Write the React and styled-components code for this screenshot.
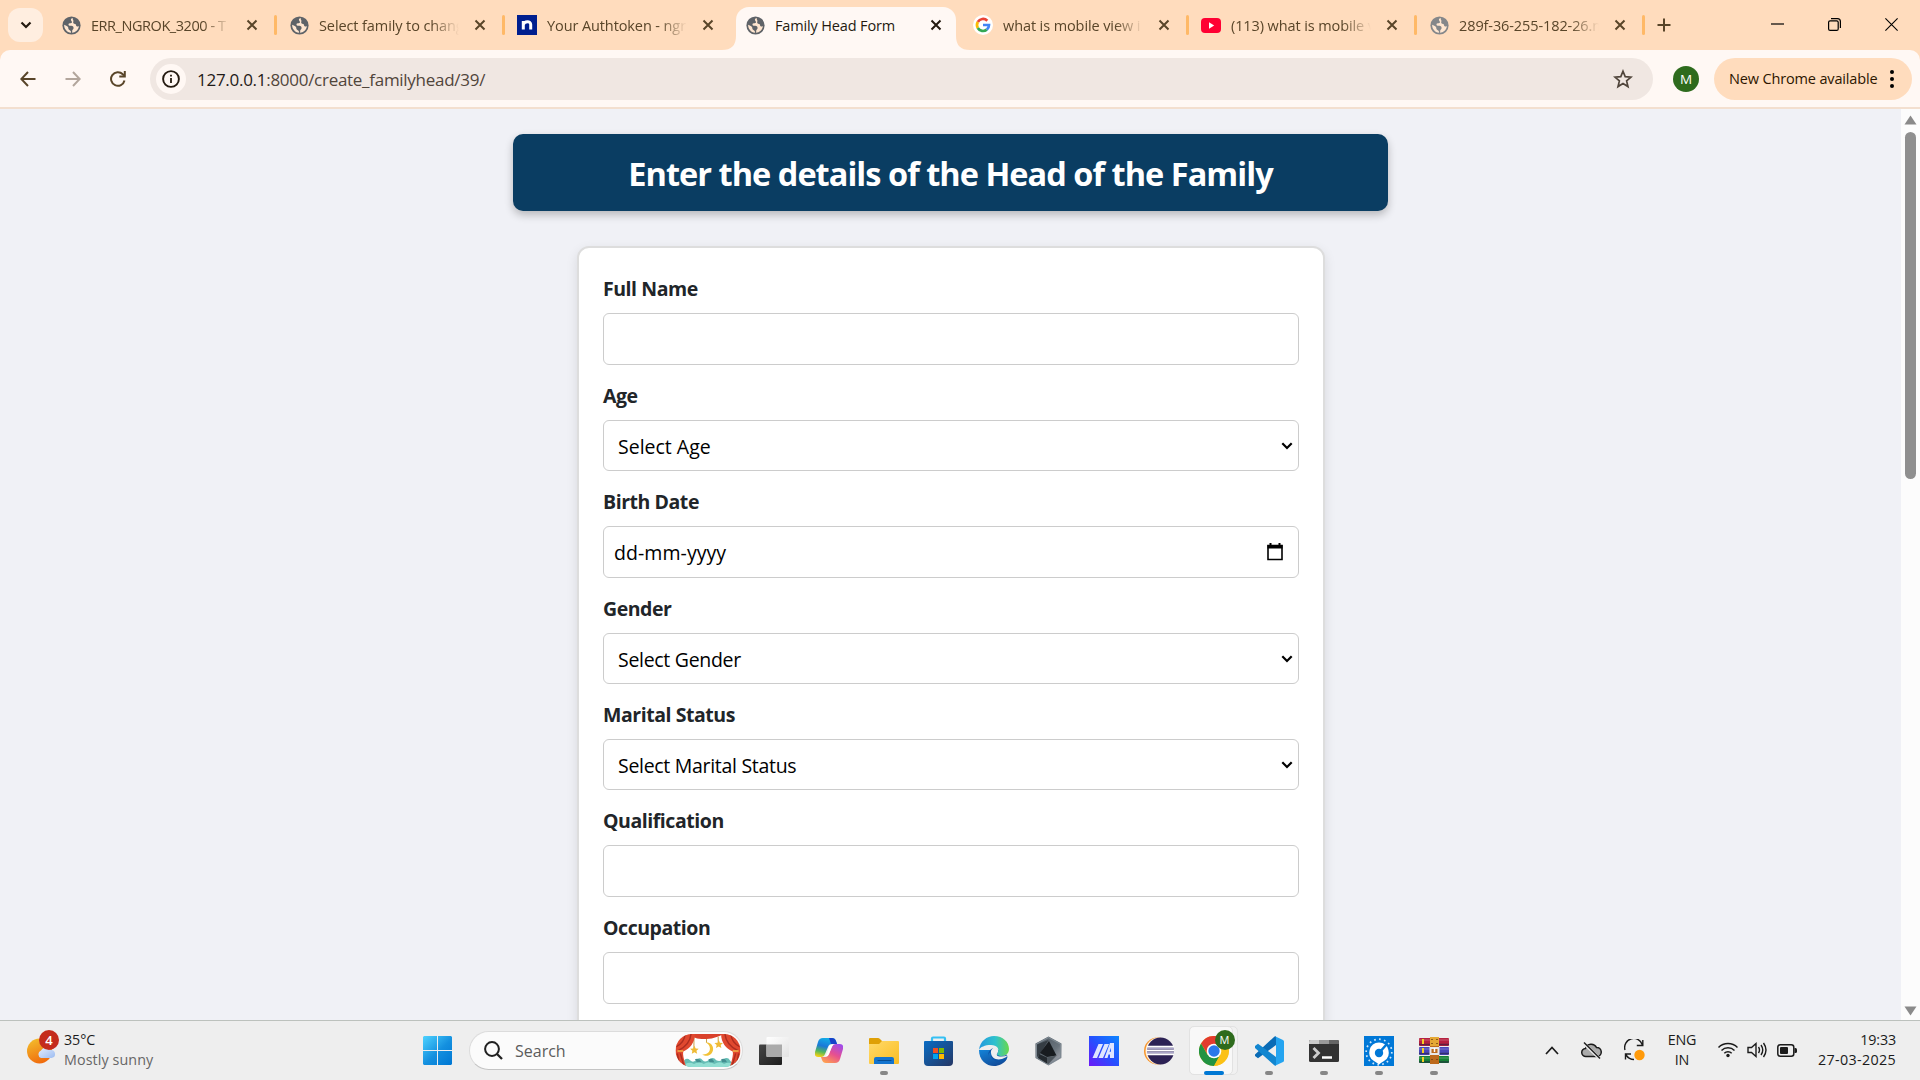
import React from "react";
import styled, { createGlobalStyle, css } from "styled-components";

const Global = createGlobalStyle`
  *, *::before, *::after { box-sizing: border-box; }
  body { margin: 0; overflow: hidden; font-family: "Open Sans", "Noto Sans", sans-serif; }
  svg { display: block; flex: none; }
`;

const Screen = styled.div`
  width: 1920px;
  height: 1080px;
  display: flex;
  flex-direction: column;
  overflow: hidden;
`;

/* ---------- tab strip ---------- */
const TabStrip = styled.div`
  height: 50px;
  flex: none;
  display: flex;
  background: #ffdcbd;
  padding-left: 8px;
`;
const TabSearch = styled.div`
  width: 35px;
  height: 34px;
  margin: 8px 8px 0 0;
  border-radius: 12px;
  background: #ffeee0;
  display: flex;
  align-items: center;
  justify-content: center;
`;
const Tab = styled.div`
  position: relative;
  width: 228px;
  flex: none;
  height: 50px;
  display: flex;
  align-items: center;
  padding: 0 0 0 10px;
  color: ${(p) => (p.$active ? "#241a10" : "#594529")};
  ${(p) =>
    p.$active &&
    css`
      &::before {
        content: "";
        position: absolute;
        left: 1px;
        top: 7px;
        width: 220px;
        height: 43px;
        background: #fff8f4;
        border-radius: 13px 13px 0 0;
      }
    `}
`;
const Flare = styled.svg`
  position: absolute;
  bottom: 0;
  left: ${(p) => p.$left}px;
`;
const Favicon = styled.div`
  position: relative;
  width: 20px;
  height: 20px;
  display: flex;
  align-items: center;
  justify-content: center;
`;
const TabTitle = styled.div`
  position: relative;
  width: 140px;
  margin-left: 10px;
  white-space: nowrap;
  font-size: 14.5px;
  line-height: 24px;
  padding-top: 1px;
  letter-spacing: ${(p) => p.$ls || 0}px;
  ${(p) => p.$fade && css`mask-image: linear-gradient(90deg, #000 112px, transparent 140px);`}
`;
const TabClose = styled.div`
  position: relative;
  margin-left: 15px;
`;
const Divider = styled.div`
  width: 3px;
  height: 20px;
  border-radius: 2px;
  margin-left: 16px;
  background: #ffb967;
  visibility: ${(p) => (p.$hidden ? "hidden" : "visible")};
`;
const NewTab = styled.div`
  display: flex;
  align-items: center;
  margin-left: 10px;
`;
const WindowButtons = styled.div`
  margin-left: auto;
  display: flex;
  align-items: center;
  height: 49px;
`;
const WindowButton = styled.div`
  width: 57px;
  display: flex;
  justify-content: center;
`;

/* ---------- toolbar ---------- */
const ToolbarBack = styled.div`
  height: 59px;
  flex: none;
  background: #ffdcbd;
`;
const Toolbar = styled.div`
  height: 59px;
  background: #fff8f4;
  border-radius: 10px 10px 0 0;
  border-bottom: 2px solid #f3dfcf;
  display: flex;
  align-items: center;
  padding: 0 8px 0 5px;
`;
const ToolButton = styled.div`
  width: 45px;
  display: flex;
  justify-content: center;
`;
const AddressBar = styled.div`
  width: 1503px;
  height: 42px;
  margin-left: 10px;
  border-radius: 21px;
  background: #f0e7e2;
  display: flex;
  align-items: center;
  padding: 0 20px 0 6px;
`;
const SiteInfo = styled.div`
  width: 30px;
  height: 30px;
  border-radius: 50%;
  background: #fff8f4;
  display: flex;
  align-items: center;
  justify-content: center;
`;
const Url = styled.div`
  flex: 1;
  margin-left: 11px;
  padding-top: 2px;
  font-size: 17px;
  color: #50453b;
  letter-spacing: -0.28px;
  b {
    font-weight: 400;
    color: #1f1a17;
  }
`;
const Avatar = styled.div`
  width: 26px;
  height: 26px;
  margin: 0 15px 0 20px;
  border-radius: 50%;
  background: #2e6b1d;
  color: #fff;
  font-size: 13.5px;
  display: flex;
  align-items: center;
  justify-content: center;
`;
const UpdatePill = styled.div`
  flex: 1;
  height: 42px;
  border-radius: 21px;
  background: #ffdcbd;
  color: #2c1600;
  display: flex;
  align-items: center;
  justify-content: space-between;
  padding: 0 18px 0 15px;
  font-size: 14.5px;
  letter-spacing: -0.15px;
  white-space: nowrap;
`;

/* ---------- page ---------- */
const Viewport = styled.div`
  height: 911px;
  flex: none;
  display: flex;
  background: #f0f1f6;
  overflow: hidden;
`;
const Page = styled.main`
  flex: 1;
  display: flex;
  flex-direction: column;
  align-items: center;
  padding-top: 25px;
`;
const Heading = styled.h1`
  margin: 0;
  width: 875px;
  height: 77px;
  flex: none;
  border-radius: 10px;
  background: #0a3d62;
  color: #fff;
  box-shadow: 0 4px 8px rgba(0, 0, 0, 0.24);
  display: flex;
  align-items: center;
  justify-content: center;
  padding-top: 3px;
  font-size: 32.5px;
  line-height: 40px;
  font-weight: 700;
  white-space: nowrap;
  letter-spacing: -0.97px;
`;
const Card = styled.form`
  width: 748px;
  height: 900px;
  flex: none;
  margin: 35px 0 0 1px;
  padding: 10px 24px 0;
  border: 2px solid #ddd;
  border-radius: 12px;
  background: #fff;
  box-shadow: 0 4px 12px rgba(0, 0, 0, 0.1);
`;
const Label = styled.label`
  display: flex;
  align-items: center;
  height: 55px;
  padding-top: 6px;
  color: #212529;
  font-size: 19.5px;
  font-weight: 700;
  letter-spacing: -0.45px;
`;
const fieldBox = css`
  display: flex;
  align-items: center;
  width: 100%;
  border: 1px solid #ccc;
  border-radius: 6px;
  background: #fff;
  color: #000;
  font-family: inherit;
  font-size: 19.5px;
  outline: none;
`;
const TextInput = styled.input`
  ${fieldBox}
  height: 52px;
  padding: 10px;
`;
const Select = styled.div`
  ${fieldBox}
  height: 51px;
  justify-content: space-between;
  padding: 2px 5px 0 14px;
  letter-spacing: ${(p) => p.$ls}px;
  svg {
    margin-top: -1px;
  }
`;
const DateField = styled.div`
  ${fieldBox}
  height: 52px;
  justify-content: space-between;
  padding: 0 15px 0 10px;
  letter-spacing: 0.06px;
`;
const Scrollbar = styled.div`
  width: 19px;
  background: #fcfcfc;
  display: flex;
  flex-direction: column;
  align-items: center;
  padding: 6px 0 4px;
`;
const Thumb = styled.div`
  width: 11px;
  height: 347px;
  margin: 7px 0 auto;
  border-radius: 6px;
  background: #8f8f8f;
`;

/* ---------- taskbar ---------- */
const Taskbar = styled.div`
  height: 60px;
  flex: none;
  display: flex;
  align-items: center;
  background: #eee;
  border-top: 1px solid #bcc1bd;
`;
const Weather = styled.div`
  width: 423px;
  display: flex;
  align-items: center;
  padding-left: 25px;
  margin-top: -2px;
  color: #1b1b1b;
`;
const WeatherText = styled.div`
  margin-left: 9px;
  font-size: 14.3px;
  line-height: 20px;
  white-space: nowrap;
  letter-spacing: -0.1px;
  span {
    display: block;
    color: #666;
    letter-spacing: 0.1px;
  }
`;
const SearchBox = styled.div`
  width: 274px;
  height: 39px;
  margin: 0 3px 0 17px;
  border: 1px solid #dcdcdc;
  border-bottom-color: #c4c4c4;
  border-radius: 20px;
  background: #fbfbfb;
  display: flex;
  align-items: center;
  padding: 0 1px 0 14px;
`;
const SearchText = styled.div`
  flex: 1;
  margin-left: 12px;
  color: #5c5c5c;
  font-size: 16px;
`;
const AppSlot = styled.div`
  position: relative;
  width: 55px;
  height: 58px;
  flex: none;
  display: flex;
  align-items: center;
  justify-content: center;
`;
const Running = styled.div`
  position: absolute;
  bottom: 5px;
  left: calc(50% - ${(p) => (p.$active ? 10 : 4)}px);
  width: ${(p) => (p.$active ? 20 : 8)}px;
  height: 4px;
  border-radius: 2px;
  background: ${(p) => (p.$active ? "#0078d4" : "#868686")};
`;
const ActiveTile = styled.div`
  position: absolute;
  left: 3px;
  top: 4px;
  width: 49px;
  height: 49px;
  border: 1px solid #e2e2e2;
  border-radius: 5px;
  background: #f1f1f1;
  &::before {
    content: "";
    position: absolute;
    inset: -1px 4px -1px -1px;
    border: 1px solid #e2e2e2;
    border-radius: 5px;
    background: #f8f8f8;
  }
`;
const OverIcon = styled.div`
  position: relative;
`;
const ProfileBadge = styled.div`
  position: absolute;
  left: 16px;
  top: -6px;
  width: 20px;
  height: 20px;
  border-radius: 50%;
  background: #2e6b1d;
  color: #fff;
  font-size: 11px;
  display: flex;
  align-items: center;
  justify-content: center;
`;
const CountBadge = styled(ProfileBadge)`
  left: 14px;
  top: -4px;
  background: #c42b1c;
  font-size: 13px;
  font-weight: 600;
`;
const Tray = styled.div`
  margin-left: auto;
  display: flex;
  align-items: center;
  padding-right: 24px;
  margin-top: -1px;
  color: #1b1b1b;
`;
const TrayIcons = styled.div`
  display: flex;
  align-items: center;
  gap: ${(p) => p.$gap}px;
`;
const TwoLine = styled.div`
  font-size: 14.3px;
  line-height: 20.5px;
  white-space: nowrap;
  text-align: ${(p) => p.$align};
  width: ${(p) => p.$width}px;
  margin-left: ${(p) => p.$gap}px;
  letter-spacing: -0.15px;
`;
const DateText = styled.span`
  letter-spacing: 0.35px;
`;

/* ---------- drawings ---------- */
const Globe = ({ c = "#5f6368" }) => (
  <svg width="19" height="19" viewBox="0 0 24 24">
    <circle cx="12" cy="12" r="11.5" fill={c} />
    <path d="M13.6 2.6c-1.6.3-2.5 1.3-2.3 2.6.2 1.3 1.2 1.3 1.3 2.4.1 1.3-1.3 1.6-2.8 1.7-1.3.1-1.9.9-1.5 2 .5 1.2 2 .9 3.5 1.1 2 .3 3 1.4 2.8 3-.2 1.4-1.5 1.7-1.7 2.900-.1 1 .3 1.900-.5 2.900 4.700-.3 8.700-4 9-8.600-1 .7-2 .9-2.900.3-1-.7-.6-1.900-1.600-2.700-.8-.6-1.900-.2-2.500-1.100-.6-1 .1-1.900 0-3-.1-1.300-1.300-1.800-.8-3.500zM2.700 11c-.2 5 3.600 9.700 8.600 10.200.3-1.600-.2-2.600-1.500-3.300-1.300-.7-1.900-1.300-1.800-2.800C8.100 13 5.800 12.800 2.700 11z" fill="#ffe6d0" />
  </svg>
);
const X = ({ c = "#594529" }) => (
  <svg width="12" height="12" viewBox="0 0 12 12">
    <path d="M1.500 1.500l9 9M10.500 1.500l-9 9" stroke={c} strokeWidth="2" />
  </svg>
);
const Ngrok = () => (
  <svg width="20" height="20" viewBox="0 0 20 20">
    <rect width="20" height="20" fill="#001f8f" />
    <path d="M6.300 14.500V6M6.300 9.500C7.500 6 13.700 5.500 13.700 9.500v5" fill="none" stroke="#fff" strokeWidth="3" />
  </svg>
);
const Google = () => (
  <svg width="20" height="20" viewBox="0 0 20 20">
    <circle cx="10" cy="10" r="10" fill="#fff" />
    <g fill="none" strokeWidth="2.700">
      <path d="M14.300 5.700A6 6 0 0 0 4.800 7" stroke="#ea4335" />
      <path d="M4.800 7a6 6 0 0 0 0 6" stroke="#fbbc05" />
      <path d="M4.800 13a6 6 0 0 0 9 1.600" stroke="#34a853" />
      <path d="M13.800 14.600A6 6 0 0 0 16 10h-6" stroke="#4285f4" />
    </g>
  </svg>
);
const Youtube = () => (
  <svg width="20" height="15" viewBox="0 0 20 15">
    <rect width="20" height="15" rx="4" fill="#ff0033" />
    <path d="M8 4.300l5.200 3.200L8 10.700z" fill="#fff" />
  </svg>
);
const Moon = () => (
  <svg width="66" height="33" viewBox="0 0 67 34">
    <clipPath id="pill"><rect width="67" height="34" rx="17" /></clipPath>
    <g clipPath="url(#pill)">
      <rect width="67" height="34" fill="#fff" />
      <path d="M9 27q3-3 6 0t6 0q4-4 7 0 3 3 7-1 4-3 7 1 4 2 7-1 5-3 7 1t8 0v8H9z" fill="#66bdb5" />
      <path d="M10 31q5-3 9 0 6-4 10 0 6-4 11 0 6-4 10 0 5-3 9 0v4H10z" fill="#91ded2" />
      <path d="M20 26q4-2 7 3l-5 0M34 26q4-2 6 3h-5M47 26q4-2 6 3h-5" fill="#448f91" />
      <path d="M19 2v13M44 3v5M32 4v5" stroke="#c69b42" />
      <path d="M31 8.500a7 7 0 1 1-3.500 12.500c4.500.5 8-2 8-6 0-3-2-5-4.500-6.500z" fill="#f2c136" />
      <path d="M19.500 12l1.300 2.900 3.100.3-2.300 2.100.7 3.100-2.800-1.600-2.700 1.600.6-3.100-2.300-2.100 3.100-.3zM44.500 6l1.300 2.900 3.100.3-2.300 2.100.7 3.100-2.800-1.600-2.700 1.600.6-3.100-2.300-2.100 3.100-.3z" fill="#efba35" />
      <path d="M15 0c3 7 24 7 34 0z" fill="#d9412b" />
      <path d="M0 0h20c0 9-5 15-12 18q-1 4 3 16H0zM67 0H47c0 9 5 15 12 18q1 4-3 16h11z" fill="#e0482f" />
      <path d="M16 0Q15 11 3 17M10 0Q9 9 1 13M64 17Q52 11 51 0M66 13Q58 9 57 0M5 20l4 14M62 20l-4 14M2 20l2 13M65 20l-2 13" stroke="#ad2d20" strokeWidth="1.500" fill="none" />
      <path d="M2 17.500h6M59 17.500h6" stroke="#f3b54a" strokeWidth="1.500" />
    </g>
  </svg>
);
const Windows = () => (
  <svg width="29" height="29" viewBox="0 0 29 29">
    <defs><linearGradient id="win" gradientUnits="userSpaceOnUse" x1="0" y1="0" x2="27" y2="29"><stop stopColor="#4fd3ff" /><stop offset=".55" stopColor="#1490df" /><stop offset="1" stopColor="#0078d4" /></linearGradient></defs>
    <path d="M1 0h13v14H0V1zM15 0h13l1 1v13H15zM0 15h14v14H1l-1-1zM15 15h14v13l-1 1H15z" fill="url(#win)" />
  </svg>
);
const TaskView = () => (
  <svg width="30" height="28" viewBox="0 0 30 28">
    <defs>
      <linearGradient id="tvd" x2="1" y2="1"><stop stopColor="#454545" /><stop offset="1" stopColor="#1d1d1d" /></linearGradient>
      <linearGradient id="tvl" x2="1" y2="1"><stop stopColor="#fff" /><stop offset="1" stopColor="#e2e2e2" /></linearGradient>
    </defs>
    <rect y="7.500" width="23" height="20.500" rx="1" fill="url(#tvd)" />
    <rect x="7.500" width="22.500" height="20" rx="1" fill="url(#tvl)" />
    <path d="M7.500 7.500H23V20H8.500q-1 0-1-1z" fill="#aaa" />
  </svg>
);
const Copilot = () => (
  <svg width="28" height="25" viewBox="0 0 28 25">
    <defs>
      <linearGradient id="cp1" x1=".6" x2=".3" y2="1"><stop stopColor="#12b1e8" /><stop offset=".45" stopColor="#1b78d8" /><stop offset=".75" stopColor="#54b85b" /><stop offset="1" stopColor="#f0cf16" /></linearGradient>
      <linearGradient id="cp2" x1=".8" x2=".2" y2="1"><stop stopColor="#a04bea" /><stop offset=".5" stopColor="#e7508f" /><stop offset="1" stopColor="#ffa24f" /></linearGradient>
    </defs>
    <path d="M8 0h9q3 0 4 3l1 3h-5q-3 0-4 3l-3 7q-1 3-4 3H3q-4 0-3-5L3 4q1-4 5-4z" fill="url(#cp1)" />
    <path d="M14 0h3q3 0 4 3l1 3h-6z" fill="#1741c9" />
    <path d="M20 25h-9q-3 0-4-3l-1-3h4q3 0 4-3l3-7q1-3 4-3h4q4 0 3 5l-3 10q-1 4-5 4z" fill="url(#cp2)" />
    <path d="M14 8q1.500-1.500 4.500-1.500-1.500 1-2.500 4l-2 5.500q-1 2.500-4 2.500 1.500-1 2.500-4z" fill="#fff" />
  </svg>
);
const Explorer = () => (
  <svg width="30" height="28" viewBox="0 0 30 28">
    <defs><linearGradient id="ex" x2="1" y2="1"><stop stopColor="#ffda6b" /><stop offset="1" stopColor="#fbbd22" /></linearGradient></defs>
    <path d="M0 2q0-1 1-1h8q1 0 2 1l2 2v4H0z" fill="#dfa006" />
    <path d="M0 7h10l3-3h16q1 0 1 1v21q0 1-1 1H1q-1 0-1-1z" fill="url(#ex)" />
    <path d="M5 27v-5q0-2 2-2h16q2 0 2 2v5z" fill="#1374cf" />
    <path d="M9 23.500h13" stroke="#064d93" strokeWidth="1.200" strokeLinecap="round" />
  </svg>
);
const Store = () => (
  <svg width="29" height="30" viewBox="0 0 29 30">
    <defs><linearGradient id="st" x2="1" y2="1"><stop stopColor="#096cc4" /><stop offset="1" stopColor="#253764" /></linearGradient></defs>
    <path d="M8 6V2.500q0-1 1-1h11q1 0 1 1V6" fill="none" stroke="#35c0f3" strokeWidth="2.200" />
    <path d="M0 6q0-1 1-1h27q1 0 1 1v20q0 4-4 4H4q-4 0-4-4z" fill="url(#st)" />
    <path d="M9 12h5v5H9z" fill="#f25022" /><path d="M15 12h5v5h-5z" fill="#7fba00" />
    <path d="M9 18h5v5H9z" fill="#00a4ef" /><path d="M15 18h5v5h-5z" fill="#ffb900" />
  </svg>
);
const Edge = () => (
  <svg width="30" height="30" viewBox="0 0 30 30">
    <defs>
      <linearGradient id="ed1" x1="0" x2="1"><stop stopColor="#2399df" /><stop offset=".55" stopColor="#2fc2cc" /><stop offset="1" stopColor="#69d84c" /></linearGradient>
      <linearGradient id="ed2" x2=".7" y2="1"><stop stopColor="#1384d9" /><stop offset="1" stopColor="#114a98" /></linearGradient>
    </defs>
    <path d="M0 14C0 24 7 30 15 30c5 0 10-2.500 12.500-6.500L20 14z" fill="url(#ed2)" />
    <path d="M0 14C1 5 8 0 15 0c9 0 15 6 15 13 0 5-4 7-8 7-3 0-5-1-3.500-3C21 13 18 9 12 9 6 9 1 11 0 14z" fill="url(#ed1)" />
    <path d="M9 20c0-5 3-8 7-8 3 1 4 3 2.500 5-1.500 2 .5 3 3.500 3 2 0 4-.5 5.500-1.500Q29.500 21 27 24c-3 2.500-7 2.500-10 1-4-1.500-6-5-5-9-2 1-3 2.500-3 4z" fill="#0d55a8" />
    <path d="M17.500 12c-3-1-6 1-5.500 5 .5 5 5 7.500 11 6l4.500-2 .5-1.500q-2 1-6 1c-4 0-5-1.500-3.500-3.500 1-1.500 1-4-1-5z" fill="#eee" />
  </svg>
);
const Hex = () => (
  <svg width="27" height="30" viewBox="0 0 27 30">
    <defs><linearGradient id="hx" x2="1" y2="1"><stop stopColor="#4c555e" /><stop offset=".6" stopColor="#69737c" /><stop offset="1" stopColor="#b8b8c0" /></linearGradient></defs>
    <path d="M13.500.5l13 7v14.500l-13 7.500-13-7.500V7.500z" fill="url(#hx)" />
    <path d="M13.500 1.500L25.500 8v13.500l-12 7-12-7V8z" fill="none" stroke="#7e8992" strokeWidth="1.200" />
    <path d="M2 8.500L13.500 4 5 18l-3 3z" fill="#353d44" />
    <path d="M14 5l7.500 14.500L12 21l-7-4z" fill="#181c20" />
    <path d="M4 18l8 3.500v6L3 22z" fill="#23292e" />
    <path d="M12 21.500l9.500-2-8 8.500-1.500-.5z" fill="#4d555c" />
  </svg>
);
const Armoury = () => (
  <svg width="30" height="30" viewBox="0 0 30 30">
    <defs><linearGradient id="ma" x1="1" x2="0" y2="1"><stop stopColor="#0d86ff" /><stop offset=".5" stopColor="#2650ff" /><stop offset="1" stopColor="#6c17f7" /></linearGradient></defs>
    <rect width="30" height="30" fill="url(#ma)" />
    <path d="M3.500 22L9.500 8h4.500L8 22zM9.500 22L15.500 8H20L14 22z" fill="#dfe5ff" />
    <path d="M15.500 22L21 7h4v15h-4v-3.500h-1.500L18.500 22zM20.500 15.700H22v-4z" fillRule="evenodd" fill="#dfe5ff" />
  </svg>
);
const Eclipse = () => (
  <svg width="30" height="28" viewBox="0 0 30 28">
    <circle cx="13.500" cy="14" r="13.500" fill="#f7942a" />
    <circle cx="15" cy="14" r="13.500" fill="#fff0dc" />
    <circle cx="16.500" cy="14" r="13.500" fill="#2c2255" />
    <path d="M3 9.700h27M2.500 13.500h27.500M3 17.300h27" stroke="#fff" strokeWidth="2" />
    <path d="M3 11.500h27M3 15.400h27" stroke="#a9a4c8" strokeWidth="1.500" />
  </svg>
);
const Chrome = () => (
  <svg width="30" height="30" viewBox="0 0 30 30">
    <circle cx="15" cy="15" r="15" fill="#fbc116" />
    <path d="M15 15h13V7.500A15 15 0 0 0 2 7.500L8.500 18z" fill="#e33b2e" />
    <path d="M2 7.500A15 15 0 0 0 15 30l6.500-11.200L15 15l-6.500 3.800z" fill="#229342" />
    <path d="M15 8.200h13A15 15 0 0 1 15 30l6-11z" fill="#fbc116" />
    <circle cx="15" cy="15" r="7.300" fill="#fff" />
    <circle cx="15" cy="15" r="5.700" fill="#2a78ea" />
  </svg>
);
const VSCode = () => (
  <svg width="30" height="30" viewBox="0 0 30 30">
    <path d="M1 18.500L20 1q1-1 2-.5V9L4 22.300 1 20z" fill="#0a6bb5" />
    <path d="M1 10l3-2.200L22 21v8.500q-1 .5-2-.5L1 12z" fill="#1286d0" />
    <path d="M21 .3l8 3.700q1 .5 1 1.500v19q0 1-1 1.500l-8 3.700q1-1 1-2.500V2.800Q22 1 21 .3z" fill="#24a4f0" />
  </svg>
);
const Terminal = () => (
  <svg width="30" height="22" viewBox="0 0 30 22">
    <rect width="30" height="22" rx="1.500" fill="#333" />
    <path d="M1.500 0H10v4H0V1.500Q0 0 1.500 0z" fill="#ccc" /><path d="M10 0h10v4H10z" fill="#999" /><path d="M20 0h8.500Q30 0 30 1.500V4H20z" fill="#666" />
    <path d="M4.500 8l5 5-5 5" fill="none" stroke="#ccc" strokeWidth="2.800" /><path d="M13 17.500h10" stroke="#fff" strokeWidth="2.500" />
  </svg>
);
const Gauge = () => (
  <svg width="30" height="30" viewBox="0 0 30 30">
    <rect width="30" height="30" fill="#0078d7" />
    <circle cx="15" cy="16" r="12.800" fill="none" stroke="#cfe6fa" strokeWidth="1.700" strokeDasharray="1.700 3.300" />
    <path d="M15 6.500a10 10 0 0 1 5 18.500q-3 1.500-5 3.500-2-2-5-3.500a10 10 0 0 1 5-18.500z" fill="#fff" />
    <path d="M22 9l-7 8" stroke="#0078d7" strokeWidth="2.500" strokeLinecap="round" /><circle cx="15" cy="17" r="4.200" fill="#0078d7" />
  </svg>
);
const WinRar = () => (
  <svg width="30" height="27" viewBox="0 0 30 27">
    <rect y="1" width="30" height="8" rx="1" fill="#b5213f" /><rect y="10" width="30" height="8" rx="1" fill="#4a47b8" /><rect y="19" width="30" height="7" rx="1" fill="#168035" />
    <path d="M0 7.500h30M0 16.500h30M0 25h30" stroke="#262040" strokeWidth="1.500" opacity=".6" />
    <path d="M0 3h30M0 12h30M0 21h30" stroke="#fff" opacity=".25" strokeWidth="1.200" />
    <path d="M4 2v5M4 11v5M4 20v5" stroke="#f4cf25" strokeWidth="2" />
    <rect x="11" width="9" height="27" fill="#bd6a1c" /><path d="M11 0h9v9h-9z" fill="#e5a834" />
    <path d="M13 2v1M18 2v1M13 6v1M18 6v1M13 22v1M18 22v1" stroke="#704012" strokeWidth="1.500" />
    <rect x="11.500" y="11" width="8" height="6" fill="none" stroke="#e8e8e8" strokeWidth="2" /><path d="M15.500 11v4" stroke="#fff" strokeWidth="1.500" />
  </svg>
);
const WeatherIcon = () => (
  <svg width="30" height="32" viewBox="0 0 30 32">
    <defs><linearGradient id="sun" x1=".2" x2=".6" y2="1"><stop stopColor="#f3bd2c" /><stop offset="1" stopColor="#f0690c" /></linearGradient>
    <linearGradient id="cl" x2="1" y2="1"><stop stopColor="#e7effd" /><stop offset="1" stopColor="#9cbcf1" /></linearGradient></defs>
    <circle cx="14.500" cy="17" r="12.500" fill="url(#sun)" />
    <path d="M16 25a4 4 0 0 1 0-7.500 5.500 5.500 0 0 1 9.500-.5 4 4 0 0 1 1 8z" fill="url(#cl)" transform="translate(0 -1)" />
  </svg>
);

const tabs = [
  { icon: <Globe />, title: "ERR_NGROK_3200 - T", fade: true, ls: -0.45 },
  { icon: <Globe />, title: "Select family to chang", fade: true, ls: -0.1 },
  { icon: <Ngrok />, title: "Your Authtoken - ngr", fade: true, ls: -0.1, noDivider: true },
  { icon: <Globe />, title: "Family Head Form", active: true, ls: -0.15, noDivider: true },
  { icon: <Google />, title: "what is mobile view i", fade: true, ls: -0.1 },
  { icon: <Youtube />, title: "(113) what is mobile v", fade: true, ls: -0.1 },
  { icon: <Globe c="#85878a" />, title: "289f-36-255-182-26.n", fade: true, ls: -0.1 },
];

const apps = [
  { icon: <TaskView /> },
  { icon: <Copilot /> },
  { icon: <Explorer />, running: true },
  { icon: <Store /> },
  { icon: <Edge /> },
  { icon: <Hex /> },
  { icon: <Armoury /> },
  { icon: <Eclipse /> },
  { icon: <Chrome />, running: true, active: true },
  { icon: <VSCode />, running: true },
  { icon: <Terminal />, running: true },
  { icon: <Gauge />, running: true },
  { icon: <WinRar />, running: true },
];

const fields = [
  { label: "Full Name", kind: "text" },
  { label: "Age", kind: "select", value: "Select Age", ls: 0 },
  { label: "Birth Date", kind: "date", value: "dd-mm-yyyy" },
  { label: "Gender", kind: "select", value: "Select Gender", ls: -0.3 },
  { label: "Marital Status", kind: "select", value: "Select Marital Status", ls: -0.3 },
  { label: "Qualification", kind: "text" },
  { label: "Occupation", kind: "text" },
];

const Field = ({ kind, value, ls }) => {
  if (kind === "select")
    return (
      <Select role="combobox" $ls={ls}>
        <span>{value}</span>
        <svg width="12" height="8" viewBox="0 0 12 8"><path d="M1.300 1.300L6 6l4.700-4.700" fill="none" stroke="#000" strokeWidth="2.200" /></svg>
      </Select>
    );
  if (kind === "date")
    return (
      <DateField>
        <span>{value}</span>
        <svg width="16" height="18" viewBox="0 0 16 18">
          <path d="M1 2.500h14v14H1z" fill="none" stroke="#000" strokeWidth="1.600" />
          <path d="M.5 2h15v3.500H.5zM2.500 0h2v3h-2zM11.500 0h2v3h-2z" />
        </svg>
      </DateField>
    );
  return <TextInput />;
};

export default function App() {
  return (
    <Screen>
      <Global />
      <TabStrip>
        <TabSearch>
          <svg width="12" height="8" viewBox="0 0 12 8"><path d="M1.500 1.500L6 6l4.500-4.500" fill="none" stroke="#241a10" strokeWidth="2.200" /></svg>
        </TabSearch>
        {tabs.map((t) => (
          <Tab key={t.title} $active={t.active}>
            {t.active && (
              <>
                <Flare $left={-13} width="14" height="14" viewBox="0 0 14 14"><path d="M14 0v14H0Q14 14 14 0z" fill="#fff8f4" /></Flare>
                <Flare $left={221} width="14" height="14" viewBox="0 0 14 14"><path d="M0 0v14h14Q0 14 0 0z" fill="#fff8f4" /></Flare>
              </>
            )}
            <Favicon>{t.icon}</Favicon>
            <TabTitle $fade={t.fade} $ls={t.ls}>{t.title}</TabTitle>
            <TabClose><X c={t.active ? "#241a10" : "#594529"} /></TabClose>
            <Divider $hidden={t.noDivider} />
          </Tab>
        ))}
        <NewTab>
          <svg width="14" height="14" viewBox="0 0 14 14"><path d="M7 .5v13M.5 7h13" stroke="#594529" strokeWidth="2" /></svg>
        </NewTab>
        <WindowButtons>
          <WindowButton><svg width="13" height="13" viewBox="0 0 13 13"><path d="M0 6h13" stroke="#000" strokeWidth="1.200" /></svg></WindowButton>
          <WindowButton>
            <svg width="13" height="13" viewBox="0 0 13 13" fill="none" stroke="#000" strokeWidth="1.200">
              <rect x=".6" y="2.800" width="9.600" height="9.600" rx="1.500" /><path d="M3 .6h6.500q2.900 0 2.900 2.900V10" />
            </svg>
          </WindowButton>
          <WindowButton><svg width="13" height="13" viewBox="0 0 13 13"><path d="M.4.4l12.200 12.200M12.600.4L.4 12.600" stroke="#000" strokeWidth="1.100" /></svg></WindowButton>
        </WindowButtons>
      </TabStrip>

      <ToolbarBack>
        <Toolbar>
          <ToolButton><svg width="16" height="16" viewBox="0 0 16 16" fill="none" stroke="#594529" strokeWidth="2"><path d="M15.500 8H1.500M8 1L1.300 8 8 15" /></svg></ToolButton>
          <ToolButton><svg width="16" height="16" viewBox="0 0 16 16" fill="none" stroke="#b3a69c" strokeWidth="2"><path d="M.5 8h14M8 1l6.700 7L8 15" /></svg></ToolButton>
          <ToolButton><svg width="16" height="16" viewBox="0 0 16 16"><path d="M14.500 9.500A6.800 6.800 0 1 1 12.800 3.300L14 4.500" fill="none" stroke="#594529" strokeWidth="2" /><path d="M15.800 0v6.500H9.300v-2h4.500V0z" fill="#594529" /></svg></ToolButton>
          <AddressBar>
            <SiteInfo>
              <svg width="18" height="18" viewBox="0 0 18 18"><circle cx="9" cy="9" r="7.900" fill="none" stroke="#241a10" strokeWidth="1.900" /><path d="M9 8v5M9 4.700v1.800" stroke="#241a10" strokeWidth="1.800" /></svg>
            </SiteInfo>
            <Url><b>127.0.0.1</b>:8000/create_familyhead/39/</Url>
            <svg width="20" height="20" viewBox="0 0 20 20"><path d="M10 2.200l2.200 5.400 5.900.5-4.500 3.800 1.400 5.700-5-3-5 3 1.400-5.700L1.900 8.100l5.900-.5z" fill="none" stroke="#50453b" strokeWidth="1.700" /></svg>
          </AddressBar>
          <Avatar>M</Avatar>
          <UpdatePill>
            New Chrome available
            <svg width="4" height="18" viewBox="0 0 4 18"><circle cx="2" cy="2" r="2" /><circle cx="2" cy="9" r="2" /><circle cx="2" cy="16" r="2" /></svg>
          </UpdatePill>
        </Toolbar>
      </ToolbarBack>

      <Viewport>
        <Page>
          <Heading>Enter the details of the Head of the Family</Heading>
          <Card>
            {fields.map((f) => (
              <React.Fragment key={f.label}>
                <Label>{f.label}</Label>
                <Field kind={f.kind} value={f.value} ls={f.ls} />
              </React.Fragment>
            ))}
          </Card>
        </Page>
        <Scrollbar>
          <svg width="13" height="10" viewBox="0 0 13 10"><path d="M6.500.5L12.500 9.500H.5z" fill="#8a8a8a" /></svg>
          <Thumb />
          <svg width="13" height="10" viewBox="0 0 13 10"><path d="M6.500 9.500L12.500.5H.5z" fill="#8a8a8a" /></svg>
        </Scrollbar>
      </Viewport>

      <Taskbar>
        <Weather>
          <OverIcon><WeatherIcon /><CountBadge>4</CountBadge></OverIcon>
          <WeatherText>35°C<span>Mostly sunny</span></WeatherText>
        </Weather>
        <Windows />
        <SearchBox>
          <svg width="19" height="19" viewBox="0 0 19 19"><circle cx="8" cy="8" r="6.900" fill="none" stroke="#202020" strokeWidth="2" /><path d="M13 13l5 5" stroke="#202020" strokeWidth="2.300" /></svg>
          <SearchText>Search</SearchText>
          <Moon />
        </SearchBox>
        {apps.map((a, i) => (
          <AppSlot key={i}>
            {a.active && <ActiveTile />}
            <OverIcon>{a.icon}{a.active && <ProfileBadge>M</ProfileBadge>}</OverIcon>
            {a.running && <Running $active={a.active} />}
          </AppSlot>
        ))}
        <Tray>
          <TrayIcons $gap={22}>
            <svg width="14" height="9" viewBox="0 0 14 9"><path d="M1 8l6-6.500L13 8" fill="none" stroke="#1b1b1b" strokeWidth="1.700" /></svg>
            <svg width="21" height="17" viewBox="0 0 21 17"><path d="M5 14.500a4 4 0 0 1-.5-8 6 6 0 0 1 11-1 4.500 4.500 0 0 1 .5 9z" fill="#aaa" stroke="#1b1b1b" strokeWidth="1.500" /><path d="M2.500 1l16 15.500" stroke="#eee" strokeWidth="3" /><path d="M3 .5l16 16" stroke="#1b1b1b" strokeWidth="1.400" /></svg>
            <svg width="21" height="22" viewBox="0 0 21 22"><path d="M1 11A9 9 0 0 1 18.500 6M18.800 1v5.500h-6M1.500 20.500V15h5.500M2 16q3 4.500 8 4.500" fill="none" stroke="#1b1b1b" strokeWidth="1.400" /><circle cx="15.500" cy="16" r="5.200" fill="#ff9a0a" /></svg>
          </TrayIcons>
          <TwoLine $align="center" $width={40} $gap={17}>ENG<br />IN</TwoLine>
          <TrayIcons $gap={9}>
            <svg width="36" height="16" viewBox="-16 0 36 16" fill="none" stroke="#1b1b1b" strokeWidth="1.500"><path d="M.5 5.500a13.500 13.500 0 0 1 19 0M3.500 8.500a9.200 9.200 0 0 1 13 0M6.300 11.300a5.300 5.300 0 0 1 7.400 0" /><circle cx="10" cy="13.500" r="1.700" fill="#1b1b1b" stroke="none" /></svg>
            <svg width="21" height="18" viewBox="0 0 21 18" fill="none" stroke="#1b1b1b" strokeWidth="1.400"><path d="M1 6.500h3.500L9 2.500v13l-4.500-4H1zM11.500 6q2 3 0 6M14 4q3.500 5 0 10M16.500 2q5 7 0 14" /></svg>
            <svg width="20" height="13" viewBox="0 0 20 13"><rect x=".8" y=".8" width="16" height="11.400" rx="2.500" fill="none" stroke="#1b1b1b" strokeWidth="1.500" /><rect x="3" y="3" width="8" height="7" rx="1" fill="#1b1b1b" /><path d="M17.500 4h1q1.500 0 1.500 1.500v2Q20 9 18.500 9h-1z" fill="#1b1b1b" /></svg>
          </TrayIcons>
          <TwoLine $align="right" $width={80} $gap={19}>19:33<br /><DateText>27-03-2025</DateText></TwoLine>
        </Tray>
      </Taskbar>
    </Screen>
  );
}
